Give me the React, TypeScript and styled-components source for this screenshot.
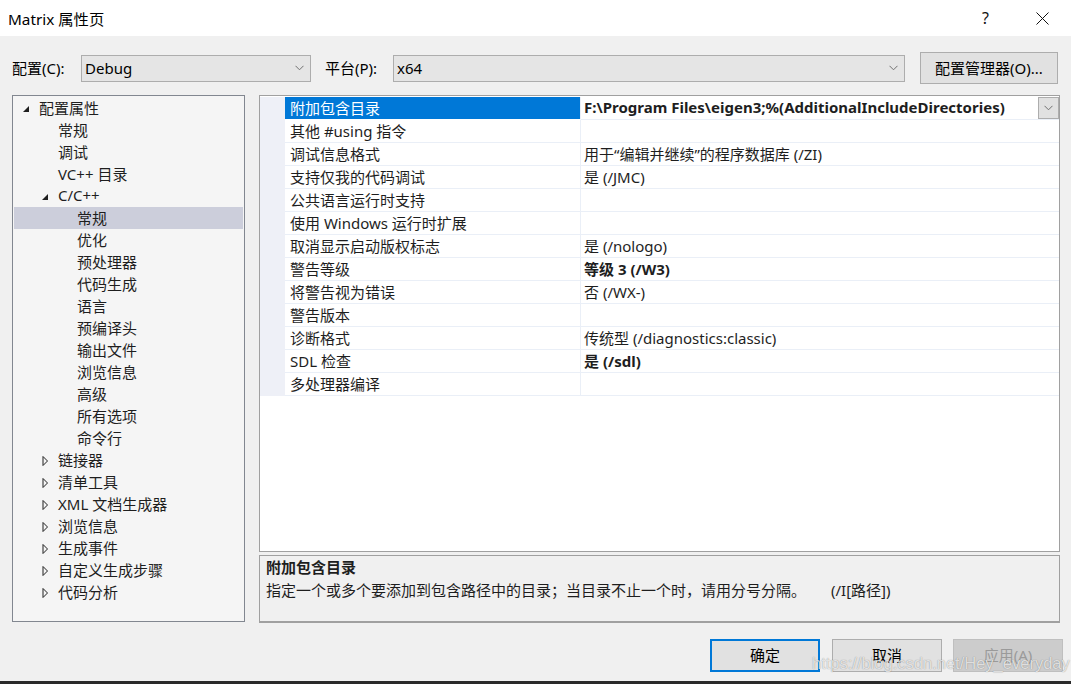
import styled, { createGlobalStyle } from "styled-components";

const GlobalStyle = createGlobalStyle`
  html, body {
    margin: 0;
    padding: 0;
    background: #f0f0f0;
  }
  body {
    font-family: "Noto Sans", "Noto Sans CJK SC", sans-serif;
    font-size: 15px;
    color: #000;
  }
`;

const Window = styled.div`
  position: relative;
  width: 1071px;
  height: 684px;
  display: flex;
  flex-direction: column;
  background: #f0f0f0;
  overflow: hidden;
`;

const TitleBar = styled.div`
  height: 36px;
  flex: none;
  background: #fff;
  display: flex;
  align-items: center;
  padding-left: 8px;
`;

const Title = styled.div`
  flex: 1;
  font-size: 15.3px;
  padding-bottom: 1px;
`;

const TitleButton = styled.div`
  width: 57px;
  height: 36px;
  display: flex;
  align-items: center;
  justify-content: center;
  font-size: 16px;
  color: #111;
`;

const ConfigRow = styled.div`
  margin-top: 16px;
  height: 32px;
  display: flex;
  align-items: center;
  padding-left: 12px;
`;

const Label = styled.div<{ $width: number }>`
  width: ${({ $width }) => $width}px;
  flex: none;
  padding-bottom: 1px;
`;

const Combo = styled.div<{ $width: number }>`
  width: ${({ $width }) => $width}px;
  height: 27px;
  box-sizing: border-box;
  flex: none;
  border: 1px solid #adadad;
  background: #e5e5e5;
  display: flex;
  align-items: center;
  padding-left: 3px;
  padding-right: 6px;
`;

const ComboText = styled.span`
  flex: 1;
  padding-bottom: 1px;
`;

const Button = styled.button<{ $primary?: boolean; $width: number; $height: number }>`
  width: ${({ $width }) => $width}px;
  height: ${({ $height }) => $height}px;
  flex: none;
  box-sizing: border-box;
  font-family: inherit;
  font-size: 15px;
  color: #000;
  background: #e1e1e1;
  border: ${({ $primary }) => ($primary ? "2px solid #0078d7" : "1px solid #adadad")};
  padding: 0 0 2px 0;
  &:disabled {
    background: #cccccc;
    border-color: #bfbfbf;
    color: #9a9a9a;
  }
`;

const Main = styled.div`
  margin-top: 11px;
  display: flex;
  padding-left: 12px;
  gap: 14px;
`;

const TreePanel = styled.div`
  width: 233px;
  height: 527px;
  box-sizing: border-box;
  border: 1px solid #828790;
  background: #f5f5f5;
  padding: 1px 1px 0 1px;
`;

const TreeRow = styled.div<{ $level: number; $selected?: boolean }>`
  height: 22px;
  box-sizing: border-box;
  padding-bottom: 2px;
  display: flex;
  align-items: center;
  padding-left: ${({ $level }) => 8 + $level * 19}px;
  background: ${({ $selected }) => ($selected ? "#cccedb" : "transparent")};
  color: #1e1e1e;
`;

const Toggle = styled.span`
  width: 17px;
  flex: none;
  display: flex;
  align-items: center;
  padding-top: 3px;
`;

const RightColumn = styled.div`
  width: 801px;
  display: flex;
  flex-direction: column;
  gap: 3px;
`;

const Grid = styled.div`
  height: 457px;
  box-sizing: border-box;
  border: 1px solid #a0a0a0;
  background: #fff;
  padding-top: 1px;
`;

const PropRow = styled.div`
  display: flex;
  height: 23px;
`;

const Gutter = styled.div`
  width: 25px;
  flex: none;
  background: #eef0f7;
`;

const NameCell = styled.div<{ $selected?: boolean }>`
  width: 296px;
  flex: none;
  box-sizing: border-box;
  padding-left: 5px;
  padding-bottom: 2px;
  display: flex;
  align-items: center;
  border-bottom: 1px solid ${({ $selected }) => ($selected ? "#fff" : "#eaeff7")};
  border-right: 1px solid #eaeff7;
  background: ${({ $selected }) => ($selected ? "#0078d7" : "#fff")};
  color: ${({ $selected }) => ($selected ? "#fff" : "#1e1e1e")};
`;

const ValueCell = styled.div<{ $bold?: boolean }>`
  flex: 1;
  box-sizing: border-box;
  padding-left: 3px;
  display: flex;
  align-items: center;
  border-bottom: 1px solid #eaeff7;
  font-weight: ${({ $bold }) => ($bold ? 700 : 400)};
  color: #1e1e1e;
  white-space: nowrap;
`;

const ValueText = styled.span`
  flex: 1;
  padding-bottom: 2px;
`;

const DropButton = styled.div`
  width: 21px;
  height: 22px;
  box-sizing: border-box;
  border: 1px solid #adadad;
  background: #e1e1e1;
  display: flex;
  align-items: center;
  justify-content: center;
  align-self: flex-start;
`;

const Description = styled.div`
  height: 68px;
  box-sizing: border-box;
  border: 1px solid #a0a0a0;
  border-bottom: 2px solid #a0a0a0;
  background: #f0f0f0;
  padding: 0 6px;
  font-size: 15px;
  color: #1e1e1e;
`;

const DescTitle = styled.div`
  font-weight: 700;
  line-height: 22px;
`;

const DescText = styled.div`
  line-height: 24px;
  white-space: nowrap;
`;

const Switch = styled.span`
  margin-left: 25px;
`;

const Footer = styled.div`
  margin-top: 16px;
  display: flex;
  justify-content: flex-end;
  padding-right: 8px;
  gap: 11px;
`;

const Watermark = styled.div`
  position: absolute;
  left: 812px;
  top: 654px;
  font-family: "Liberation Sans", sans-serif;
  font-size: 16.5px;
  color: rgba(255, 255, 255, 0.75);
  text-shadow: 0 0 1px rgba(0, 0, 0, 0.45);
  pointer-events: none;
`;

const Taskbar = styled.div`
  position: absolute;
  left: 0;
  right: 0;
  bottom: 0;
  height: 3px;
  background: #2a2a2a;
`;

const Chevron = () => (
  <svg width="9" height="6" viewBox="0 0 9 6">
    <path d="M0.5 0.8 L4.5 4.8 L8.5 0.8" fill="none" stroke="#707070" strokeWidth="1" />
  </svg>
);

const Expanded = () => (
  <svg width="8" height="8" viewBox="0 0 8 8">
    <path d="M7 1 L7 7 L1 7 Z" fill="#1e1e1e" />
  </svg>
);

const Collapsed = () => (
  <svg width="8" height="10" viewBox="0 0 8 10">
    <path d="M2 0.5 L6.5 5 L2 9.5 Z" fill="none" stroke="#1e1e1e" strokeWidth="1" />
  </svg>
);

const CloseIcon = () => (
  <svg width="13" height="13" viewBox="0 0 13 13">
    <path d="M0.5 0.5 L12.5 12.5 M12.5 0.5 L0.5 12.5" stroke="#111" strokeWidth="1" />
  </svg>
);

type TreeItem = { label: string; level: number; toggle?: "open" | "closed"; selected?: boolean };

const tree: TreeItem[] = [
  { label: "配置属性", level: 0, toggle: "open" },
  { label: "常规", level: 1 },
  { label: "调试", level: 1 },
  { label: "VC++ 目录", level: 1 },
  { label: "C/C++", level: 1, toggle: "open" },
  { label: "常规", level: 2, selected: true },
  { label: "优化", level: 2 },
  { label: "预处理器", level: 2 },
  { label: "代码生成", level: 2 },
  { label: "语言", level: 2 },
  { label: "预编译头", level: 2 },
  { label: "输出文件", level: 2 },
  { label: "浏览信息", level: 2 },
  { label: "高级", level: 2 },
  { label: "所有选项", level: 2 },
  { label: "命令行", level: 2 },
  { label: "链接器", level: 1, toggle: "closed" },
  { label: "清单工具", level: 1, toggle: "closed" },
  { label: "XML 文档生成器", level: 1, toggle: "closed" },
  { label: "浏览信息", level: 1, toggle: "closed" },
  { label: "生成事件", level: 1, toggle: "closed" },
  { label: "自定义生成步骤", level: 1, toggle: "closed" },
  { label: "代码分析", level: 1, toggle: "closed" },
];

const props: { name: string; value: string; bold?: boolean }[] = [
  { name: "附加包含目录", value: "F:\\Program Files\\eigen3;%(AdditionalIncludeDirectories)", bold: true },
  { name: "其他 #using 指令", value: "" },
  { name: "调试信息格式", value: "用于“编辑并继续”的程序数据库 (/ZI)" },
  { name: "支持仅我的代码调试", value: "是 (/JMC)" },
  { name: "公共语言运行时支持", value: "" },
  { name: "使用 Windows 运行时扩展", value: "" },
  { name: "取消显示启动版权标志", value: "是 (/nologo)" },
  { name: "警告等级", value: "等级 3 (/W3)", bold: true },
  { name: "将警告视为错误", value: "否 (/WX-)" },
  { name: "警告版本", value: "" },
  { name: "诊断格式", value: "传统型 (/diagnostics:classic)" },
  { name: "SDL 检查", value: "是 (/sdl)", bold: true },
  { name: "多处理器编译", value: "" },
];

export default function App() {
  return (
    <Window>
      <GlobalStyle />
      <TitleBar>
        <Title>Matrix 属性页</Title>
        <TitleButton>?</TitleButton>
        <TitleButton>
          <CloseIcon />
        </TitleButton>
      </TitleBar>

      <ConfigRow>
        <Label $width={69}>配置(C):</Label>
        <Combo $width={230}>
          <ComboText>Debug</ComboText>
          <Chevron />
        </Combo>
        <Label $width={68} style={{ marginLeft: 14 }}>平台(P):</Label>
        <Combo $width={512}>
          <ComboText>x64</ComboText>
          <Chevron />
        </Combo>
        <Button $width={138} $height={32} style={{ marginLeft: 15 }}>
          配置管理器(O)...
        </Button>
      </ConfigRow>

      <Main>
        <TreePanel>
          {tree.map((item, i) => (
            <TreeRow key={i} $level={item.level} $selected={item.selected}>
              <Toggle>
                {item.toggle === "open" && <Expanded />}
                {item.toggle === "closed" && <Collapsed />}
              </Toggle>
              {item.label}
            </TreeRow>
          ))}
        </TreePanel>

        <RightColumn>
          <Grid>
            {props.map((p, i) => (
              <PropRow key={i}>
                <Gutter />
                <NameCell $selected={i === 0}>{p.name}</NameCell>
                <ValueCell $bold={p.bold}>
                  <ValueText>{p.value}</ValueText>
                  {i === 0 && (
                    <DropButton>
                      <Chevron />
                    </DropButton>
                  )}
                </ValueCell>
              </PropRow>
            ))}
          </Grid>
          <Description>
            <DescTitle>附加包含目录</DescTitle>
            <DescText>
              指定一个或多个要添加到包含路径中的目录；当目录不止一个时，请用分号分隔。
              <Switch>(/I[路径])</Switch>
            </DescText>
          </Description>
        </RightColumn>
      </Main>

      <Footer>
        <Button $primary $width={110} $height={33}>确定</Button>
        <Button $width={110} $height={33} style={{ marginLeft: 1 }}>取消</Button>
        <Button $width={110} $height={33} disabled>应用(A)</Button>
      </Footer>

      <Watermark>https://blog.csdn.net/Hey_everyday</Watermark>
      <Taskbar />
    </Window>
  );
}
